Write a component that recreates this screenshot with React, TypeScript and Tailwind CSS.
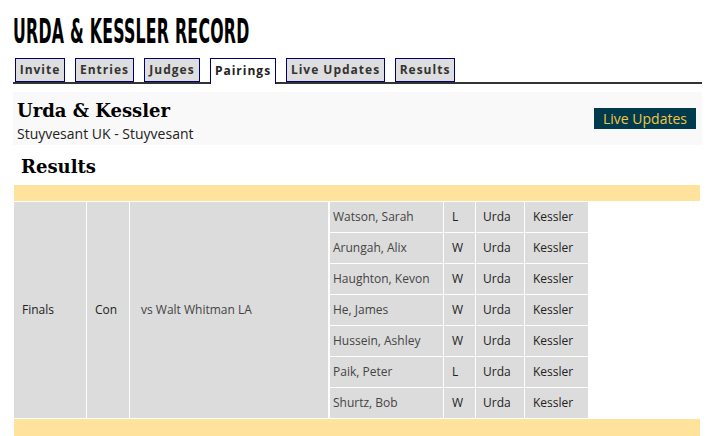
import React from "react";

const tabs = [
  { label: "Invite", w: "w-[50px]" },
  { label: "Entries", w: "w-[59px]" },
  { label: "Judges", w: "w-[56px]" },
  { label: "Pairings", w: "w-[66px]", active: true },
  { label: "Live Updates", w: "w-[99px]" },
  { label: "Results", w: "w-[60px]" },
];

const rows = [
  ["Watson, Sarah", "L"],
  ["Arungah, Alix", "W"],
  ["Haughton, Kevon", "W"],
  ["He, James", "W"],
  ["Hussein, Ashley", "W"],
  ["Paik, Peter", "L"],
  ["Shurtz, Bob", "W"],
];

export default function App() {
  return (
    <div className="w-[720px] h-[436px] bg-white overflow-hidden pl-[13px] font-['Open_Sans',sans-serif] text-[#222]">
      <h1 className="pt-[15px] h-[48px] leading-none">
        <span className="inline-block origin-left scale-x-[0.53] text-[33px] font-bold text-black tracking-[0.5px] font-['Liberation_Sans_Narrow','DejaVu_Sans_Condensed',sans-serif] whitespace-nowrap">
          URDA &amp; KESSLER RECORD
        </span>
      </h1>
      <div className="mt-[10px] w-[689px] flex items-end gap-[10px] pl-[2px] border-b-2 border-[#333]">
        {tabs.map((t) => (
          <div
            key={t.label}
            className={
              t.active
                ? `${t.w} h-[26px] -mb-[2px] bg-white border border-b-0 border-[#000070] flex items-center justify-center pb-[2px] text-[12px] font-bold tracking-[1px] text-[#222]`
                : `${t.w} h-[24px] bg-[#dedede] border border-[#000070] flex items-center justify-center text-[12px] font-bold tracking-[1px] text-[#333]`
            }
          >
            {t.label}
          </div>
        ))}
      </div>
      <div className="mt-[8px] w-[689px] h-[53px] bg-[#f9f9f9] flex items-center justify-between pl-[4px] pr-[6px]">
        <div className="flex flex-col pt-[4px]">
          <div className="text-[18px] leading-[26px] font-bold text-black font-['DejaVu_Serif',serif]">
            Urda &amp; Kessler
          </div>
          <div className="text-[14px] leading-[20px] text-[#222]">Stuyvesant UK - Stuyvesant</div>
        </div>
        <div className="w-[102px] h-[21px] bg-[#003a4d] text-[#f2c647] text-[14px] flex items-center justify-center">
          Live Updates
        </div>
      </div>
      <h2 className="pl-[8px] pt-[10px] h-[40px] text-[18px] leading-[24px] font-bold text-black font-['DejaVu_Serif',serif]">
        Results
      </h2>
      <div className="ml-[1px] w-[686px] h-[16px] bg-[#ffe29c]" />
      <div className="ml-[1px] mt-[1px] flex text-[12px]">
        <div className="w-[72px] h-[216px] bg-[#dcdcdc] flex items-center pl-[8px] text-[#222]">Finals</div>
        <div className="ml-[1px] w-[42px] h-[216px] bg-[#dcdcdc] flex items-center pl-[8px] text-[#222]">Con</div>
        <div className="ml-[1px] w-[198px] h-[216px] bg-[#dcdcdc] flex items-center pl-[11px] pb-[1px] text-[#444]">
          vs Walt Whitman LA
        </div>
        <div className="ml-[2px] grid grid-cols-[113px_31px_48px_63px] gap-px">
          {rows.map(([name, res]) => (
            <React.Fragment key={name}>
              <div className="h-[30px] bg-[#dcdcdc] flex items-center pl-[3px] pb-[1px] text-[#444]">{name}</div>
              <div className="h-[30px] bg-[#dcdcdc] flex items-center pl-[8px] text-[#222]">{res}</div>
              <div className="h-[30px] bg-[#dcdcdc] flex items-center pl-[7px] text-[#222]">Urda</div>
              <div className="h-[30px] bg-[#dcdcdc] flex items-center pl-[8px] text-[#222]">Kessler</div>
            </React.Fragment>
          ))}
        </div>
      </div>
      <div className="ml-[1px] mt-[1px] w-[686px] h-[17px] bg-[#ffe29c]" />
    </div>
  );
}
